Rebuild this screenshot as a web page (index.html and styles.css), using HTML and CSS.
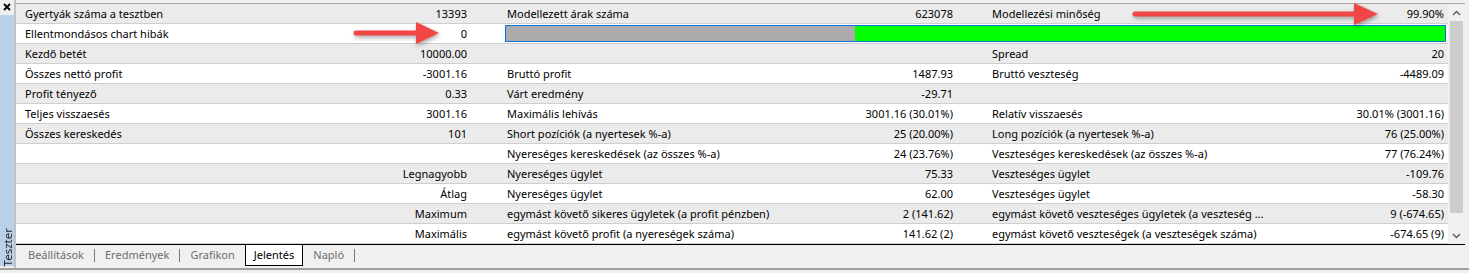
FILE: index.html
```html
<!DOCTYPE html>
<html lang="hu">
<head>
    <meta charset="UTF-8">
    <title>Teszter - Jelentés</title>
    <link rel="stylesheet" href="styles.css">
</head>
<body>
<div class="window">
    <div class="sidebar">
        <div class="close">
            <svg width="8" height="8" viewBox="0 0 8 8"><path d="M1 1 L7 7 M7 1 L1 7" stroke="#000" stroke-width="1.8"/></svg>
        </div>
        <div class="sidebar-title"><span>Teszter</span></div>
    </div>

    <div class="main">
        <div class="report">
            <div class="table">
                <div class="row">
                    <div class="lbl first">Gyertyák száma a tesztben</div><div class="val">13393</div>
                    <div class="lbl mid">Modellezett árak száma</div><div class="val">623078</div>
                    <div class="lbl last">Modellezési minőség</div><div class="val">99.90%</div>
                </div>
                <div class="row">
                    <div class="lbl first">Ellentmondásos chart hibák</div><div class="val">0</div>
                    <div class="quality">
                        <div class="quality-bad" style="width: 37.2%"></div>
                        <div class="quality-good"></div>
                    </div>
                </div>
                <div class="row">
                    <div class="lbl first">Kezdő betét</div><div class="val">10000.00</div>
                    <div class="lbl mid"></div><div class="val"></div>
                    <div class="lbl last">Spread</div><div class="val">20</div>
                </div>
                <div class="row">
                    <div class="lbl first">Összes nettó profit</div><div class="val">-3001.16</div>
                    <div class="lbl mid">Bruttó profit</div><div class="val">1487.93</div>
                    <div class="lbl last">Bruttó veszteség</div><div class="val">-4489.09</div>
                </div>
                <div class="row">
                    <div class="lbl first">Profit tényező</div><div class="val">0.33</div>
                    <div class="lbl mid">Várt eredmény</div><div class="val">-29.71</div>
                    <div class="lbl last"></div><div class="val"></div>
                </div>
                <div class="row">
                    <div class="lbl first">Teljes visszaesés</div><div class="val">3001.16</div>
                    <div class="lbl mid">Maximális lehívás</div><div class="val">3001.16 (30.01%)</div>
                    <div class="lbl last">Relatív visszaesés</div><div class="val">30.01% (3001.16)</div>
                </div>
                <div class="row">
                    <div class="lbl first">Összes kereskedés</div><div class="val">101</div>
                    <div class="lbl mid">Short pozíciók (a nyertesek %-a)</div><div class="val">25 (20.00%)</div>
                    <div class="lbl last">Long pozíciók (a nyertesek %-a)</div><div class="val">76 (25.00%)</div>
                </div>
                <div class="row">
                    <div class="lbl first"></div><div class="val"></div>
                    <div class="lbl mid">Nyereséges kereskedések (az összes %-a)</div><div class="val">24 (23.76%)</div>
                    <div class="lbl last">Veszteséges kereskedések (az összes %-a)</div><div class="val">77 (76.24%)</div>
                </div>
                <div class="row">
                    <div class="lbl first"></div><div class="val">Legnagyobb</div>
                    <div class="lbl mid">Nyereséges ügylet</div><div class="val">75.33</div>
                    <div class="lbl last">Veszteséges ügylet</div><div class="val">-109.76</div>
                </div>
                <div class="row">
                    <div class="lbl first"></div><div class="val">Átlag</div>
                    <div class="lbl mid">Nyereséges ügylet</div><div class="val">62.00</div>
                    <div class="lbl last">Veszteséges ügylet</div><div class="val">-58.30</div>
                </div>
                <div class="row">
                    <div class="lbl first"></div><div class="val">Maximum</div>
                    <div class="lbl mid">egymást követő sikeres ügyletek (a profit pénzben)</div><div class="val">2 (141.62)</div>
                    <div class="lbl last">egymást követő veszteséges ügyletek (a veszteség ...</div><div class="val">9 (-674.65)</div>
                </div>
                <div class="row">
                    <div class="lbl first"></div><div class="val">Maximális</div>
                    <div class="lbl mid">egymást követő profit (a nyereségek száma)</div><div class="val">141.62 (2)</div>
                    <div class="lbl last">egymást követő veszteségek (a veszteségek száma)</div><div class="val">-674.65 (9)</div>
                </div>
            </div>

            <div class="scrollbar">
                <div class="scroll-btn">
                    <svg width="9" height="6" viewBox="0 0 9 6"><path d="M1 5 L4.5 1.5 L8 5" fill="none" stroke="#606060" stroke-width="1.5"/></svg>
                </div>
                <div class="scroll-track"><div class="scroll-thumb"></div></div>
                <div class="scroll-btn">
                    <svg width="9" height="6" viewBox="0 0 9 6"><path d="M1 1 L4.5 4.5 L8 1" fill="none" stroke="#606060" stroke-width="1.5"/></svg>
                </div>
            </div>
        </div>

        <div class="tabs">
            <span class="tab">Beállítások</span><span class="sep"></span>
            <span class="tab">Eredmények</span><span class="sep"></span>
            <span class="tab">Grafikon</span>
            <span class="tab active">Jelentés</span>
            <span class="tab">Napló</span><span class="sep"></span>
        </div>
    </div>

    <!-- annotation arrows -->
    <svg class="arrows" width="1469" height="273" viewBox="0 0 1469 273">
        <g fill="#f24646" stroke="#f24646">
            <line x1="356" y1="33" x2="420" y2="33" stroke-width="5" stroke-linecap="round"/>
            <polygon points="416,22 439,33 416,44" stroke="none"/>
            <line x1="1135" y1="14" x2="1358" y2="14" stroke-width="5" stroke-linecap="round"/>
            <polygon points="1354,3 1378,14 1354,25" stroke="none"/>
        </g>
    </svg>
</div>
</body>
</html>
```

FILE: styles.css
```css
body {
    margin: 0;
    background: #f0f0f0;
    font-family: "Noto Sans", "Open Sans", sans-serif;
    font-size: 11px;
    color: #000;
}

.window {
    position: relative;
    display: flex;
    width: 1469px;
    height: 270px;
    border-bottom: 2px solid #a0a0a0;
    box-sizing: border-box;
}

/* left strip */
.sidebar {
    width: 14px;
    border-right: 2px solid #c2c2c2;
    display: flex;
    flex-direction: column;
    flex-shrink: 0;
}
.close {
    height: 15px;
    display: flex;
    justify-content: center;
    padding-top: 3px;
    box-sizing: border-box;
}
.sidebar-title {
    flex: 1;
    background: #b9d1ea;
    display: flex;
    align-items: flex-end;
    justify-content: center;
    margin-bottom: 2px;
}
.sidebar-title span {
    writing-mode: vertical-rl;
    transform: rotate(180deg);
    font-size: 11.5px;
    line-height: 13px;
    color: #1e1e1e;
    padding-bottom: 2px;
}

.main {
    flex: 1;
    display: flex;
    flex-direction: column;
    padding-top: 3px;
}

.report {
    display: flex;
    border-top: 1px solid #a9a9a9;
    border-bottom: 1px solid #000;
    margin-right: 4px;
}

.table {
    width: 1432px;
    background: #fff;
}
.row {
    display: grid;
    grid-template-columns: 224px 227px 340px 146px 323px 168px;
    padding-right: 4px;
    height: 20px;
    line-height: 19px;
    border-bottom: 1px solid #cfcfcf;
    box-sizing: border-box;
    white-space: nowrap;
}
.row:nth-child(odd) {
    background: #ebebeb;
}
.lbl {
    overflow: hidden;
}
.lbl.first { padding-left: 9px; }
.lbl.mid { padding-left: 40px; }
.lbl.last { padding-left: 39px; }
.val {
    text-align: right;
}

.quality {
    grid-column: 3 / 7;
    margin: 1px -2px 1px 38px;
    border: 1px solid #0a74d6;
    display: flex;
    height: 17px;
    box-sizing: border-box;
}
.quality-bad {
    background: #ababab;
}
.quality-good {
    flex: 1;
    background: #00ff00;
}

/* vertical scrollbar */
.scrollbar {
    width: 17px;
    background: #f0f0f0;
    display: flex;
    flex-direction: column;
}
.scroll-btn {
    height: 17px;
    display: flex;
    align-items: center;
    justify-content: center;
}
.scroll-track {
    flex: 1;
    padding: 0 2px;
}
.scroll-thumb {
    height: 192px;
    background: #cdcdcd;
}

/* bottom tabs */
.tabs {
    display: flex;
    align-items: flex-start;
    height: 21px;
    padding-left: 2px;
    font-size: 11px;
}
.tab {
    padding: 0 10px;
    line-height: 20px;
    color: #6d6d6d;
}
.tab.active {
    color: #000;
    background: #fff;
    border: 1px solid #000;
    border-top: none;
    padding: 0 8px;
}
.sep {
    width: 1px;
    height: 13px;
    margin-top: 4px;
    background: #7a7a7a;
}

.arrows {
    position: absolute;
    left: 0;
    top: 0;
    pointer-events: none;
    filter: drop-shadow(1px 2px 2px rgba(0, 0, 0, 0.35));
}
```
